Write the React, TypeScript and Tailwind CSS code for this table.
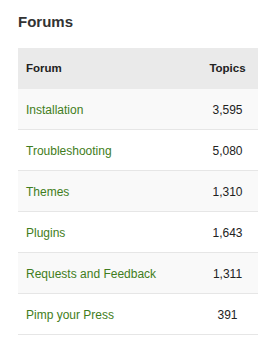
import React from "react";

const rows = [
  { name: "Installation", topics: "3,595" },
  { name: "Troubleshooting", topics: "5,080" },
  { name: "Themes", topics: "1,310" },
  { name: "Plugins", topics: "1,643" },
  { name: "Requests and Feedback", topics: "1,311" },
  { name: "Pimp your Press", topics: "391" },
];

export default function App() {
  return (
    <div
      className="w-[277px] h-[355px] bg-white pt-[12px] pl-[18px]"
      style={{ fontFamily: '"Liberation Sans", Arial, sans-serif' }}
    >
      <h2 className="text-[15px] leading-[20px] font-bold text-[#333333]">Forums</h2>
      <div className="w-[240px] mt-[16px]">
        <div className="flex items-center h-[41px] bg-[#eaeaea] text-[11.5px] font-bold text-[#222222]">
          <div className="flex-1 pl-[8px]">Forum</div>
          <div className="w-[37px] mr-[12px] text-center">Topics</div>
        </div>
        {rows.map((r, i) => (
          <div
            key={r.name}
            className={
              "flex items-center h-[41px] border-b border-[#e6e6e6] text-[12px] " +
              (i % 2 === 0 ? "bg-[#f9f9f9]" : "bg-white")
            }
          >
            <div className="flex-1 pl-[8px] text-[#3f7d20] pt-px">{r.name}</div>
            <div className="w-[37px] mr-[12px] text-center text-[#222222] pt-px whitespace-nowrap">{r.topics}</div>
          </div>
        ))}
      </div>
    </div>
  );
}
